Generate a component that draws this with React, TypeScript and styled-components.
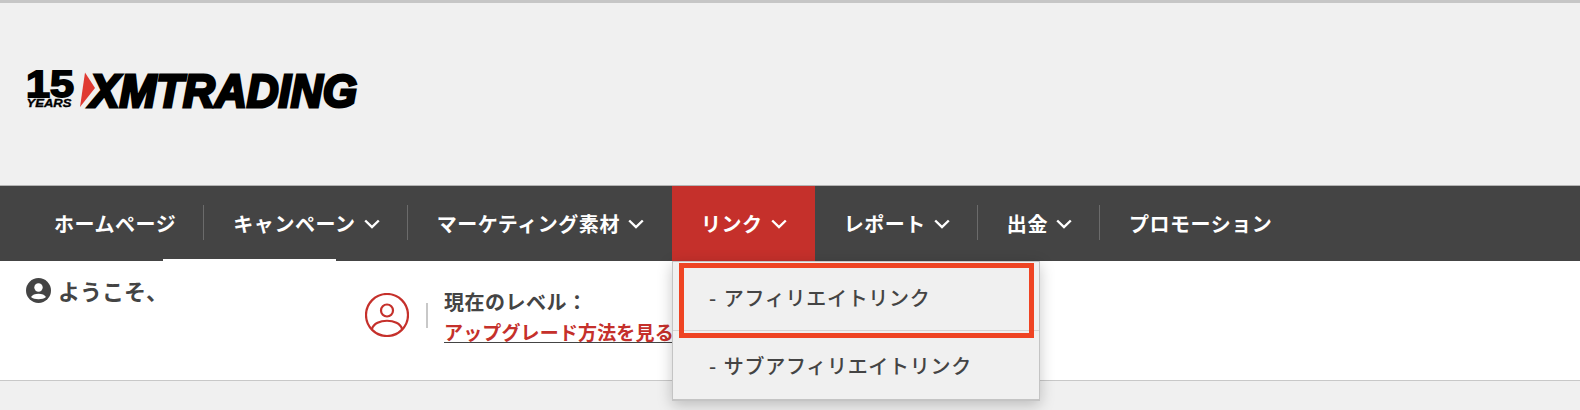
import React from "react";
import styled, { createGlobalStyle } from "styled-components";

const GlobalStyle = createGlobalStyle`
  html, body {
    margin: 0;
    padding: 0;
    background: #f0f0f0;
    overflow: hidden;
  }
  body {
    font-family: "Noto Sans CJK JP", "Noto Sans", sans-serif;
    color: #444;
  }
`;

const Page = styled.div`
  width: 1580px;
  height: 410px;
  border-top: 3px solid #c6c6c6;
  box-sizing: border-box;
`;

const Header = styled.header`
  height: 183px;
  box-sizing: border-box;
  padding: 59px 0 0 26px;
  border-bottom: 1px solid #b4b4b4;
`;

const LogoSvg = styled.svg`
  display: block;
  font-family: "Liberation Sans", Arial, sans-serif;
`;

const Nav = styled.nav`
  height: 75px;
  padding-left: 25px;
  display: flex;
  background: #444;
  position: relative;
  z-index: 2;
`;

const NavItem = styled.div<{ $active?: boolean; $divider?: boolean; $tab?: boolean }>`
  position: relative;
  display: flex;
  align-items: center;
  gap: 8px;
  padding: 0 28px 0 29px;
  color: #fff;
  font-size: 20px;
  font-weight: 700;
  letter-spacing: 0.55px;
  line-height: 1;
  white-space: nowrap;
  background: ${(p) => (p.$active ? "#c5302b" : "transparent")};

  &::after {
    content: ${(p) => (p.$divider ? '""' : "none")};
    position: absolute;
    right: 0;
    top: 19px;
    height: 35px;
    width: 1px;
    background: #6b6b6b;
  }

  &::before {
    content: ${(p) => (p.$tab ? '""' : "none")};
    position: absolute;
    left: -41px;
    bottom: 0;
    width: 173px;
    height: 2px;
    background: #fff;
  }
`;

const Dropdown = styled.div`
  position: absolute;
  left: 0;
  top: 75px;
  width: 368px;
  height: 140px;
  box-sizing: border-box;
  background: #f0f0f0;
  border: 1px solid #c4c4c4;
  border-bottom-width: 2px;
  box-shadow: 0 4px 14px rgba(0, 0, 0, 0.22);
  color: #444;
  font-weight: 500;
`;

const DropdownRow = styled.div<{ $first?: boolean }>`
  height: 69px;
  display: flex;
  align-items: center;
  gap: 7px;
  padding-left: 36px;
  padding-top: ${(p) => (p.$first ? "4px" : "0")};
  box-sizing: border-box;
  font-size: 20px;
  letter-spacing: 0.7px;
  border-bottom: ${(p) => (p.$first ? "1px solid #d4d4d4" : "none")};
`;

const Highlight = styled.div`
  position: absolute;
  left: 6px;
  top: 1px;
  width: 355px;
  height: 75px;
  box-sizing: border-box;
  border: 5px solid #ef4423;
`;

const Content = styled.section`
  height: 120px;
  box-sizing: border-box;
  background: #fff;
  border-bottom: 1px solid #c8c8c8;
  display: flex;
  padding-left: 26px;
`;

const Welcome = styled.div`
  width: 339px;
  padding-top: 17px;
  display: flex;
  align-items: flex-start;
  gap: 7px;
  font-size: 22px;
  font-weight: 700;
  line-height: 24px;
`;

const Level = styled.div`
  display: flex;
  align-items: center;
  height: 64px;
  margin-top: 22px;
`;

const LevelDivider = styled.div`
  width: 2px;
  height: 25px;
  background: #c8c8c8;
  margin: 0 16px 0 17px;
`;

const LevelText = styled.div`
  display: flex;
  flex-direction: column;
  gap: 5.5px;
  font-weight: 700;
`;

const LevelTitle = styled.div`
  font-size: 20px;
  letter-spacing: 0.5px;
  line-height: 29px;
`;

const UpgradeLink = styled.a`
  color: #c5302b;
  border-bottom: 1px solid #444;
  font-size: 19px;
  letter-spacing: 0.15px;
  line-height: 20px;
  white-space: nowrap;
`;

const Chevron = () => (
  <svg width="16" height="10" viewBox="0 0 16 10" fill="none">
    <polyline points="1.2,1.5 8,8 14.8,1.5" stroke="#fff" strokeWidth="2.4" />
  </svg>
);

const Logo = () => (
  <LogoSvg width="400" height="60" viewBox="0 -10 400 60">
    <text x="0" y="25" fontSize="37" fontWeight="700" stroke="#000" strokeWidth="1.8" textLength="48" lengthAdjust="spacingAndGlyphs">
      15
    </text>
    <text x="0.5" y="34.5" fontSize="11.5" fontWeight="700" fontStyle="italic" stroke="#000" strokeWidth="0.35" textLength="45" lengthAdjust="spacingAndGlyphs">
      YEARS
    </text>
    <polygon points="59,0.5 69,16 54,35" fill="#e03a32" />
    <text x="64" y="34.5" fontSize="47" fontWeight="700" fontStyle="italic" stroke="#000" strokeWidth="3" textLength="267" lengthAdjust="spacingAndGlyphs">
      XMTRADING
    </text>
  </LogoSvg>
);

const WelcomeIcon = () => (
  <svg width="25" height="25" viewBox="0 0 25 25">
    <circle cx="12.5" cy="12.5" r="12.5" fill="#444" />
    <circle cx="12.5" cy="9.5" r="4.2" fill="#fff" />
    <path d="M5 19 C7 14.5 18 14.5 20 19 C17 22 8 22 5 19 Z" fill="#fff" />
  </svg>
);

const LevelIcon = () => (
  <svg width="44" height="44" viewBox="0 0 44 44" fill="none" stroke="#c5302b" strokeWidth="2.2">
    <circle cx="22" cy="22" r="21" />
    <circle cx="22" cy="17.5" r="6" />
    <path d="M7 36 C10 25 34 25 37 36" />
  </svg>
);

export default function App() {
  return (
    <Page>
      <GlobalStyle />
      <Header>
        <Logo />
      </Header>
      <Nav>
        <NavItem $divider>ホームページ</NavItem>
        <NavItem $divider $tab>
          キャンペーン <Chevron />
        </NavItem>
        <NavItem>
          マーケティング素材 <Chevron />
        </NavItem>
        <NavItem $active>
          リンク <Chevron />
          <Dropdown>
            <DropdownRow $first>
              <span>-</span>
              <span>アフィリエイトリンク</span>
            </DropdownRow>
            <DropdownRow>
              <span>-</span>
              <span>サブアフィリエイトリンク</span>
            </DropdownRow>
            <Highlight />
          </Dropdown>
        </NavItem>
        <NavItem $divider>
          レポート <Chevron />
        </NavItem>
        <NavItem $divider>
          出金 <Chevron />
        </NavItem>
        <NavItem>プロモーション</NavItem>
      </Nav>
      <Content>
        <Welcome>
          <WelcomeIcon />
          ようこそ、
        </Welcome>
        <Level>
          <LevelIcon />
          <LevelDivider />
          <LevelText>
            <LevelTitle>現在のレベル：</LevelTitle>
            <UpgradeLink>アップグレード方法を見る</UpgradeLink>
          </LevelText>
        </Level>
      </Content>
    </Page>
  );
}
